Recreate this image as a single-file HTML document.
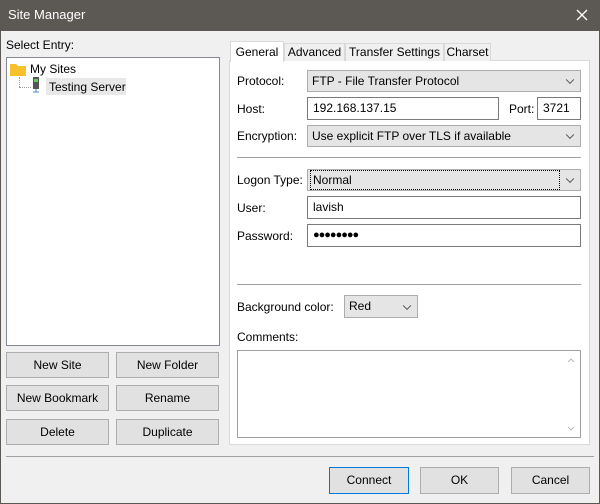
<!DOCTYPE html>
<html><head><style>
*{box-sizing:border-box;margin:0;padding:0}
body{width:600px;height:504px;background:#f0f0f0;font-family:"Liberation Sans",sans-serif;font-size:12px;color:#000;position:relative;overflow:hidden}
.a{position:absolute}
.t{position:absolute;white-space:nowrap;line-height:14px}
.btn{position:absolute;background:#e1e1e1;border:1px solid #adadad;text-align:center;font-size:12px;white-space:nowrap}
.inp{position:absolute;background:#fff;border:1px solid #7a7a7a;padding-left:5px;white-space:nowrap}
.cmb{position:absolute;background:#e5e5e5;border:1px solid #adadad;padding-left:4px;white-space:nowrap}
.cmb:after{content:"";position:absolute;right:7px;top:50%;width:5px;height:5px;border-right:1px solid #555;border-bottom:1px solid #555;transform:translateY(-70%) rotate(45deg)}
.tab{position:absolute;background:#f0f0f0;border:1px solid #d9d9d9;border-bottom:none;text-align:center;top:43px;height:18px;line-height:17px}
.sep{position:absolute;height:1px;background:#a0a0a0}
</style></head><body>
<div class="a" style="left:0;top:0;width:600px;height:31px;background:#5c5854"></div>
<div class="t" style="left:8px;top:8px;color:#fff;font-size:13px">Site Manager</div>
<svg class="a" style="left:576px;top:9px" width="12" height="12"><path d="M1 1L11 11M11 1L1 11" stroke="#fff" stroke-width="1.3"/></svg>
<div class="a" style="left:0;top:31px;width:1px;height:473px;background:#5c5854"></div>
<div class="a" style="right:0;top:31px;width:1px;height:473px;background:#5c5854"></div>
<div class="a" style="left:0;bottom:0;width:600px;height:1px;background:#5c5854"></div>

<div class="t" style="left:6px;top:38px">Select Entry:</div>
<div class="a" style="left:6px;top:57px;width:214px;height:289px;background:#fff;border:1px solid #828790"></div>
<svg class="a" style="left:10px;top:62px" width="16" height="14"><path d="M0 2h6l2 2h8v10H0z" fill="#f7c02d"/></svg>
<div class="t" style="left:30px;top:62px">My Sites</div>
<div class="a" style="left:19px;top:77px;width:1px;height:10px;border-left:1px dotted #999"></div>
<div class="a" style="left:19px;top:87px;width:12px;height:1px;border-top:1px dotted #999"></div>
<svg class="a" style="left:32px;top:77px" width="8" height="16"><rect x="1" y="0" width="6" height="12" fill="#555"/><rect x="2" y="2" width="4" height="3" fill="#6c6"/><path d="M4 12v3M1 15h6" stroke="#48c"/></svg>
<div class="a" style="left:46px;top:78px;width:80px;height:17px;background:#e8e8e8"></div>
<div class="t" style="left:49px;top:80px">Testing Server</div>

<div class="btn" style="left:6px;top:352px;width:103px;height:26px;line-height:24px">New Site</div>
<div class="btn" style="left:116px;top:352px;width:103px;height:26px;line-height:24px">New Folder</div>
<div class="btn" style="left:6px;top:385px;width:103px;height:26px;line-height:24px">New Bookmark</div>
<div class="btn" style="left:116px;top:385px;width:103px;height:26px;line-height:24px">Rename</div>
<div class="btn" style="left:6px;top:419px;width:103px;height:26px;line-height:24px">Delete</div>
<div class="btn" style="left:116px;top:419px;width:103px;height:26px;line-height:24px">Duplicate</div>

<div class="a" style="left:229px;top:60px;width:361px;height:385px;background:#fff;border:1px solid #d9d9d9"></div>
<div class="tab" style="left:284px;width:61px">Advanced</div>
<div class="tab" style="left:345px;width:99px">Transfer Settings</div>
<div class="tab" style="left:444px;width:47px">Charset</div>
<div class="tab" style="left:230px;top:41px;width:54px;height:21px;background:#fff;line-height:20px">General</div>

<div class="t" style="left:237px;top:74px">Protocol:</div>
<div class="cmb" style="left:307px;top:70px;width:274px;height:22px;line-height:20px">FTP - File Transfer Protocol</div>
<div class="t" style="left:237px;top:102px">Host:</div>
<div class="inp" style="left:307px;top:97px;width:192px;height:23px;line-height:21px">192.168.137.15</div>
<div class="t" style="left:509px;top:102px">Port:</div>
<div class="inp" style="left:537px;top:97px;width:44px;height:23px;line-height:21px">3721</div>
<div class="t" style="left:237px;top:129px">Encryption:</div>
<div class="cmb" style="left:307px;top:125px;width:274px;height:22px;line-height:20px">Use explicit FTP over TLS if available</div>
<div class="sep" style="left:237px;top:157px;width:344px"></div>
<div class="t" style="left:237px;top:173px">Logon Type:</div>
<div class="cmb" style="left:307px;top:169px;width:274px;height:22px;line-height:18px"><span style="display:inline-block;border:1px dotted #000;width:250px;margin-left:-2px;padding-left:2px">Normal</span></div>
<div class="t" style="left:237px;top:201px">User:</div>
<div class="inp" style="left:307px;top:196px;width:274px;height:23px;line-height:21px">lavish</div>
<div class="t" style="left:237px;top:229px">Password:</div>
<div class="inp" style="left:307px;top:224px;width:274px;height:23px;line-height:21px;letter-spacing:-1px;font-size:11px">●●●●●●●●</div>
<div class="sep" style="left:237px;top:284px;width:344px"></div>
<div class="t" style="left:237px;top:300px">Background color:</div>
<div class="cmb" style="left:344px;top:295px;width:74px;height:23px;line-height:21px">Red</div>
<div class="t" style="left:237px;top:330px">Comments:</div>
<div class="a" style="left:237px;top:350px;width:344px;height:88px;background:#fff;border:1px solid #a0a0a0"></div>
<svg class="a" style="left:566px;top:355px" width="10" height="80"><path d="M2 7l3-3 3 3M2 72l3 3 3-3" stroke="#bbb" fill="none"/></svg>

<div class="sep" style="left:6px;top:456px;width:588px"></div>
<div class="btn" style="left:329px;top:467px;width:80px;height:27px;line-height:25px;border:1px solid #0078d7">Connect</div>
<div class="btn" style="left:420px;top:467px;width:79px;height:27px;line-height:25px">OK</div>
<div class="btn" style="left:511px;top:467px;width:79px;height:27px;line-height:25px">Cancel</div>
</body></html>
